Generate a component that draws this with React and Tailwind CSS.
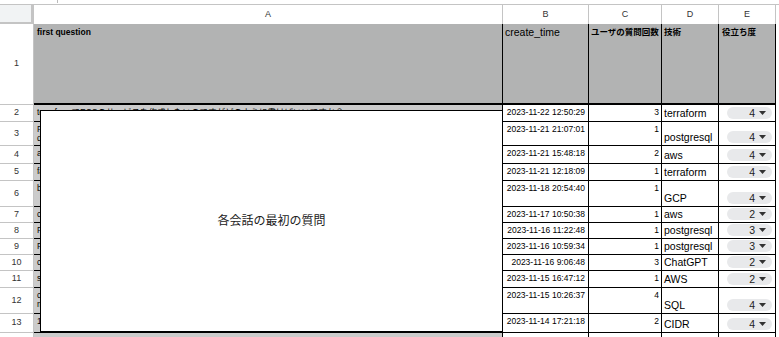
const ROWS = [
  { n: 2, a: 'terraformでECSのサービスを作成したいのですがどのように書けばいいですか？', b: '2023-11-22 12:50:29', c: 3, d: 'terraform', e: 4 },
  { n: 3, a: 'PostgreSQLのテーブルを作成したいです。', a2: 'dockerで起動しています', b: '2023-11-21 21:07:01', c: 1, d: 'postgresql', e: 4 },
  { n: 4, a: 'awsのIAMロールについて教えて', b: '2023-11-21 15:48:18', c: 2, d: 'aws', e: 4 },
  { n: 5, a: 'fargateのタスク定義を教えて', b: '2023-11-21 12:18:09', c: 1, d: 'terraform', e: 4 },
  { n: 6, a: 'bigqueryのテーブルをコピーしたい', b: '2023-11-18 20:54:40', c: 1, d: 'GCP', e: 4 },
  { n: 7, a: 'cloudwatchのログを確認したい', b: '2023-11-17 10:50:38', c: 1, d: 'aws', e: 2 },
  { n: 8, a: 'PostgreSQLのインデックス', b: '2023-11-16 11:22:48', c: 1, d: 'postgresql', e: 3 },
  { n: 9, a: 'PostgreSQLのバックアップ', b: '2023-11-16 10:59:34', c: 1, d: 'postgresql', e: 3 },
  { n: 10, a: 'chatgptのAPIを使いたい', b: '2023-11-16 9:06:48', c: 3, d: 'ChatGPT', e: 2 },
  { n: 11, a: 's3のバケットポリシー', b: '2023-11-15 16:47:12', c: 1, d: 'AWS', e: 2 },
  { n: 12, a: 'count関数の使い方を教えて', a2: 'mysqlで集計したい', b: '2023-11-15 10:26:37', c: 4, d: 'SQL', e: 4 },
  { n: 13, a: '10.0.0.0/16のCIDRについて', b: '2023-11-14 17:21:18', c: 2, d: 'CIDR', e: 4 },
];

function Chip({ value }) {
  return (
    <div className="ml-[8px] flex h-[12px] w-[45px] items-center justify-end gap-[4px] rounded-full bg-[#e8e9eb] pr-[6px] text-[10.5px] leading-none text-[#222]">
      <span>{value}</span>
      <svg width="7" height="4" viewBox="0 0 7 4">
        <path d="M0 0h7L3.5 4z" fill="#333" />
      </svg>
    </div>
  );
}

const numCell = 'border-b border-r border-[#c4c4c4] bg-white flex items-center justify-center text-[9px] text-[#333]';
const dataCell = 'border-b border-r border-black bg-white overflow-hidden';

export default function App() {
  return (
    <div className="relative h-[337px] w-[779px] overflow-hidden bg-white font-['Liberation_Sans','Noto_Sans_CJK_JP',sans-serif] text-black">
      {/* toolbar remnant */}
      <div className="relative h-[5px] border-b border-[#c4c4c4]">
        <div className="absolute left-[57px] top-0 h-[3px] w-px bg-[#bbb]" />
      </div>

      <div className="grid grid-cols-[34px_469px_86px_73px_57px_57px] grid-rows-[19px_81px_17px_24px_18px_17px_26px_16px_16px_16px_16px_17px_26px_19px_20px]">
        {/* column letters */}
        <div className="border-b-[2px] border-r-[3px] border-[#c4c4c4] bg-[#f1f3f4]" />
        {['A', 'B', 'C', 'D', 'E'].map((l) => (
          <div key={l} className="flex items-center justify-center border-r border-[#c4c4c4] bg-white text-[9px] text-[#333]">
            {l}
          </div>
        ))}

        {/* row 1 header */}
        <div className={numCell}>1</div>
        <div className="border-b-[2px] border-r border-black bg-[#b2b3b3] pl-[3px] pt-[3px] text-[8.5px] font-bold leading-[10px]">first question</div>
        <div className="border-b-[2px] border-r border-black bg-[#b2b3b3] pl-[2px] pt-[2px] text-[10.5px] leading-[13px]">create_time</div>
        <div className="border-b-[2px] border-r border-black bg-[#b2b3b3] pl-[2px] pt-[3px] text-[8.5px] font-bold leading-[10px]">ユーザの質問回数</div>
        <div className="border-b-[2px] border-r border-black bg-[#b2b3b3] pl-[2px] pt-[3px] text-[8.5px] font-bold leading-[10px]">技術</div>
        <div className="border-b-[2px] border-r border-black bg-[#b2b3b3] pl-[3px] pt-[3px] text-[8.5px] font-bold leading-[10px]">役立ち度</div>

        {ROWS.map((r) => (
          <div key={r.n} className="contents">
            <div className={numCell}>{r.n}</div>
            <div className="overflow-hidden border-b border-r border-black bg-[#cbcbcb] pl-[3px] pt-[3px] text-[8.5px] leading-[9px] whitespace-nowrap">
              <div>{r.a}</div>
              {r.a2 && <div>{r.a2}</div>}
            </div>
            <div className={`${dataCell} pr-[3px] pt-[2px] text-right text-[8.5px] leading-[10px]`}>{r.b}</div>
            <div className={`${dataCell} pr-[2px] pt-[2px] text-right text-[8.5px] leading-[10px]`}>{r.c}</div>
            <div className={`${dataCell} flex items-end pb-[1px] pl-[2px] text-[10.5px] leading-[13px]`}>{r.d}</div>
            <div className={`${dataCell} flex items-end pb-[2px]`}>
              <Chip value={r.e} />
            </div>
          </div>
        ))}

        {/* partial row 14 */}
        <div className="border-r border-[#c4c4c4] bg-white" />
        <div className="border-r border-black bg-[#cbcbcb]" />
        <div className="border-r border-black bg-white" />
        <div className="border-r border-black bg-white" />
        <div className="border-r border-black bg-white" />
        <div className="border-r border-black bg-white" />
      </div>

      {/* annotation box over column A */}
      <div className="absolute left-[40px] top-[110px] flex h-[222px] w-[463px] items-center justify-center border-[1.5px] border-black bg-white text-[12px] text-[#222]">
        各会話の最初の質問
      </div>
    </div>
  );
}
